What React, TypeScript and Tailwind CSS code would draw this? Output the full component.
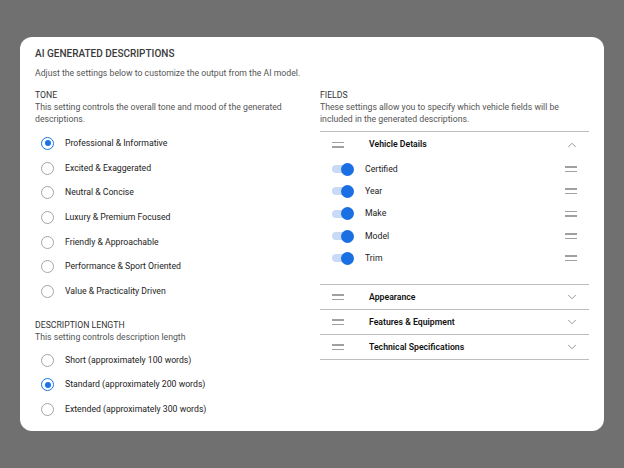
import { ChevronDown, ChevronUp } from "lucide-react";

const tones = [
  "Professional & Informative",
  "Excited & Exaggerated",
  "Neutral & Concise",
  "Luxury & Premium Focused",
  "Friendly & Approachable",
  "Performance & Sport Oriented",
  "Value & Practicality Driven",
];

const lengths = [
  "Short (approximately 100 words)",
  "Standard (approximately 200 words)",
  "Extended (approximately 300 words)",
];

const vehicleFields = ["Certified", "Year", "Make", "Model", "Trim"];

const sections = ["Appearance", "Features & Equipment", "Technical Specifications"];

function Radio({ label, checked }: { label: string; checked?: boolean }) {
  return (
    <label className="flex items-center h-[24.7px] pl-[6px]">
      <span
        className={
          checked
            ? "w-[13px] h-[13px] rounded-full border-[1.5px] border-[#1a73e8] flex items-center justify-center"
            : "w-[13px] h-[13px] rounded-full border-[1.5px] border-[#a5a5a5]"
        }
      >
        {checked && <span className="w-[6px] h-[6px] rounded-full bg-[#1a73e8]" />}
      </span>
      <span className="ml-[11px] text-[8.7px] text-[#222]">{label}</span>
    </label>
  );
}

function DragHandle() {
  return (
    <span className="flex flex-col gap-[3px] w-[12px]">
      <span className="h-[1.5px] bg-[#a0a0a0]" />
      <span className="h-[1.5px] bg-[#a0a0a0]" />
    </span>
  );
}

function Toggle() {
  return (
    <span className="relative w-[22px] h-[13px] flex items-center">
      <span className="w-[20px] h-[8px] rounded-full bg-[#c8daf6]" />
      <span className="absolute right-0 top-0 w-[13px] h-[13px] rounded-full bg-[#1a6fe3]" />
    </span>
  );
}

export default function App() {
  return (
    <div
      className="w-[624px] h-[468px] bg-[#707070] flex items-start justify-center pt-[37px]"
      style={{ fontFamily: "Roboto, 'Liberation Sans', sans-serif" }}
    >
      <div className="w-[584px] h-[394px] bg-white rounded-[12px] px-[15px] pt-[10px]">
        <h1 className="text-[10px] font-medium text-[#3a3a3a] leading-[14px] uppercase">
          AI Generated Descriptions
        </h1>
        <p className="text-[8.7px] text-[#555] mt-[6px] leading-[12px]">
          Adjust the settings below to customize the output from the AI model.
        </p>

        <div className="grid grid-cols-2 gap-[16px] mt-[10px]">
          {/* Left column */}
          <div>
            <div className="text-[8.7px] text-[#333] uppercase leading-[12px]">Tone</div>
            <p className="text-[8.7px] text-[#555] leading-[12px] pr-[10px]">
              This setting controls the overall tone and mood of the generated descriptions.
            </p>
            <div className="mt-[6px]">
              {tones.map((t, i) => (
                <Radio key={t} label={t} checked={i === 0} />
              ))}
            </div>

            <div className="text-[8.7px] text-[#333] uppercase leading-[12px] mt-[15px]">
              Description Length
            </div>
            <p className="text-[8.7px] text-[#555] leading-[12px]">
              This setting controls description length
            </p>
            <div className="mt-[5px]">
              {lengths.map((l, i) => (
                <Radio key={l} label={l} checked={i === 1} />
              ))}
            </div>
          </div>

          {/* Right column */}
          <div>
            <div className="text-[8.7px] text-[#333] uppercase leading-[12px]">Fields</div>
            <p className="text-[8.7px] text-[#555] leading-[12px] pr-[10px]">
              These settings allow you to specify which vehicle fields will be included in the generated descriptions.
            </p>

            <div className="mt-[6px] border-t border-[#bdbdbd]">
              <div className="flex items-center h-[25px] pl-[12px] pr-[10px]">
                <DragHandle />
                <span className="ml-[25px] text-[8.7px] font-semibold text-[#111]">Vehicle Details</span>
                <ChevronUp className="ml-auto w-[14px] h-[14px] text-[#888]" strokeWidth={1.5} />
              </div>
              <div className="pt-[1px] pb-[15px]">
                {vehicleFields.map((f) => (
                  <div key={f} className="flex items-center h-[22.3px] pl-[12px] pr-[12px]">
                    <Toggle />
                    <span className="ml-[11px] text-[8.7px] text-[#222]">{f}</span>
                    <span className="ml-auto">
                      <DragHandle />
                    </span>
                  </div>
                ))}
              </div>
            </div>

            {sections.map((s) => (
              <div key={s} className="flex items-center h-[25px] border-t border-[#bdbdbd] pl-[12px] pr-[10px]">
                <DragHandle />
                <span className="ml-[25px] text-[8.7px] font-semibold text-[#111]">{s}</span>
                <ChevronDown className="ml-auto w-[14px] h-[14px] text-[#888]" strokeWidth={1.5} />
              </div>
            ))}
            <div className="border-t border-[#bdbdbd]" />
          </div>
        </div>
      </div>
    </div>
  );
}
